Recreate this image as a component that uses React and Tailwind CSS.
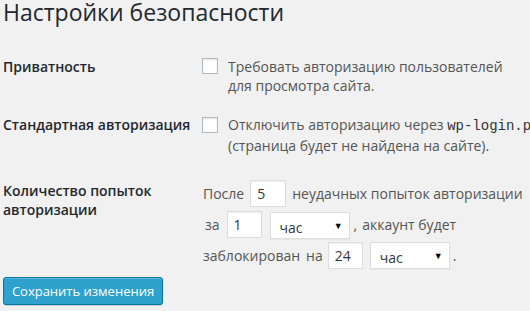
import React from 'react';

const NumBox = ({ value, width }) => (
  <div className={`${width} h-[27px] bg-white border border-[#ddd] shadow-[inset_0_1px_2px_rgba(0,0,0,0.07)] flex items-center pl-[6px] text-[#32373c] shrink-0`}>
    {value}
  </div>
);

const UnitSelect = () => (
  <div className="w-[80px] h-[27px] bg-white border border-[#ddd] shadow-[0_1px_1px_rgba(0,0,0,0.04)] flex items-center justify-between pl-[9px] pr-[6px] text-[#32373c] shrink-0">
    <span className="pt-[3px]">час</span>
    <span className="text-[9px] text-black leading-none">▼</span>
  </div>
);

const App = () => {
  return (
    <div className="w-[530px] h-[311px] overflow-hidden bg-[#f1f1f1] font-['Open_Sans',sans-serif] text-[14px] text-[#444]">
      {/* Title */}
      <h1 className="pl-[3px] text-[23px] leading-[24px] font-normal text-[#23282d]">Настройки безопасности</h1>

      {/* Privacy */}
      <div className="flex items-start mt-[33px] leading-[19px]">
        <div className="w-[202px] shrink-0 pl-[3px] font-semibold text-[#23282d]">Приватность</div>
        <div className="w-4 h-4 mt-[1px] bg-white border border-[#b4b9be] shadow-[inset_0_1px_2px_rgba(0,0,0,0.1)] shrink-0"></div>
        <div className="ml-[10px] text-[#555]">
          Требовать авторизацию пользователей<br />для просмотра сайта.
        </div>
      </div>

      {/* Standard login */}
      <div className="flex items-start mt-[20px] leading-[19px]">
        <div className="w-[202px] shrink-0 pl-[3px] font-semibold text-[#23282d]">Стандартная авторизация</div>
        <div className="w-4 h-4 mt-[2px] bg-white border border-[#b4b9be] shadow-[inset_0_1px_2px_rgba(0,0,0,0.1)] shrink-0"></div>
        <div className="ml-[10px] text-[#555] whitespace-nowrap">
          Отключить авторизацию через <code className="font-['Liberation_Mono',monospace] text-[14px] text-[#333]">wp-login.php</code><br />(страница будет не найдена на сайте).
        </div>
      </div>

      {/* Login attempts */}
      <div className="flex items-start mt-[25px]">
        <div className="w-[203px] shrink-0 pl-[3px] pt-[1px] leading-[19px] font-semibold text-[#23282d]">
          Количество попыток<br />авторизации
        </div>
        <div className="flex flex-col gap-[4px] text-[#555] leading-[19px]">
          <div className="flex items-center h-[27px]">
            <span>После</span>
            <div className="ml-[6px]"><NumBox value="5" width="w-[36px]" /></div>
            <span className="ml-[6px] whitespace-nowrap">неудачных попыток авторизации</span>
          </div>
          <div className="flex items-center h-[27px]">
            <span className="ml-[2px]">за</span>
            <div className="ml-[7px]"><NumBox value="1" width="w-[35px]" /></div>
            <div className="ml-[8px] mt-[2px]"><UnitSelect /></div>
            <span className="ml-[4px]">,</span>
            <span className="ml-[5px] whitespace-nowrap">аккаунт будет</span>
          </div>
          <div className="flex items-center h-[27px]">
            <span>заблокирован</span>
            <span className="ml-[6px]">на</span>
            <div className="ml-[5px]"><NumBox value="24" width="w-[35px]" /></div>
            <div className="ml-[7px]"><UnitSelect /></div>
            <span className="ml-[3px]">.</span>
          </div>
        </div>
      </div>

      {/* Save */}
      <button className="ml-[3px] mt-[8px] w-[160px] h-[28px] rounded-[3px] bg-[#2ea2cc] border border-[#0074a2] text-white text-[13px] leading-[26px] shadow-[inset_0_1px_0_rgba(120,200,230,0.5),0_1px_0_rgba(0,0,0,0.15)]">
        Сохранить изменения
      </button>
    </div>
  );
};

export default App;
